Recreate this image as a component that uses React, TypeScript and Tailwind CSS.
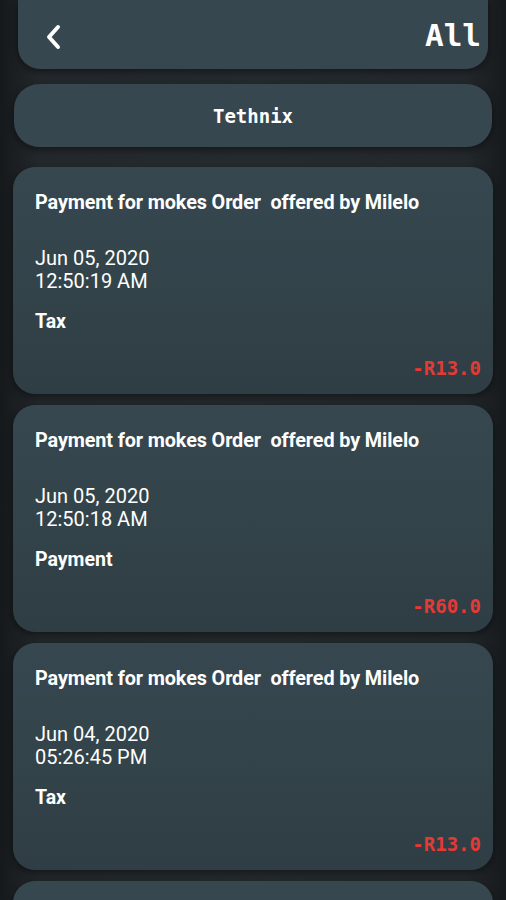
import React from "react";

const items = [
  { date: "Jun 05, 2020", time: "12:50:19 AM", type: "Tax", amount: "-R13.0" },
  { date: "Jun 05, 2020", time: "12:50:18 AM", type: "Payment", amount: "-R60.0" },
  { date: "Jun 04, 2020", time: "05:26:45 PM", type: "Tax", amount: "-R13.0" },
];

export default function App() {
  return (
    <div className="w-[506px] h-[900px] overflow-hidden bg-[linear-gradient(90deg,#16191c_0%,#24292d_8%,#262b2f_50%,#24292d_92%,#16191c_100%)]">
      <div className="mx-[18px] h-[69px] rounded-b-[22px] bg-[#37474f] shadow-[0_3px_8px_rgba(0,0,0,0.45)] flex items-center justify-between pl-[26px] pr-[7px] pt-[2px]">
        <svg width="20" height="26" viewBox="0 0 20 26" className="mt-[2px]">
          <path d="M14 3 L5 13 L14 23" fill="none" stroke="#ffffff" strokeWidth="4" strokeLinecap="round" strokeLinejoin="round" />
        </svg>
        <span className="text-white font-bold text-[31px] leading-none mt-[0px] font-['DejaVu_Sans_Mono',monospace]">All</span>
      </div>
      <div className="mx-[14px] mt-[15px] h-[63px] rounded-[25px] bg-[#37474f] shadow-[0_3px_8px_rgba(0,0,0,0.45)] flex items-center justify-center pt-[2px]">
        <span className="text-white text-[19px] font-bold font-['DejaVu_Sans_Mono',monospace]">Tethnix</span>
      </div>
      <div className="mx-[13px] mt-[20px] flex flex-col gap-[11px]">
        {items.map((it, i) => (
          <div
            key={i}
            className="h-[227px] rounded-[22px] bg-[linear-gradient(180deg,#37474f_0%,#33434a_55%,#2f3d44_100%)] shadow-[0_3px_8px_rgba(0,0,0,0.45)] px-[22px] pt-[24px] flex flex-col font-['Roboto',sans-serif] text-white"
          >
            <div className="text-[19.8px] font-bold leading-[24px] whitespace-pre tracking-[-0.1px]">Payment for mokes Order  offered by Milelo</div>
            <div className="mt-[32px] text-[20px] leading-[23px]">
              <div>{it.date}</div>
              <div>{it.time}</div>
            </div>
            <div className="mt-[17px] text-[19.5px] font-bold leading-[24px]">{it.type}</div>
            <div className="mt-[22px] self-end mr-[-10px] text-[19px] font-bold leading-[24px] text-[#e53935] font-['DejaVu_Sans_Mono',monospace]">{it.amount}</div>
          </div>
        ))}
        <div className="h-[227px] rounded-[22px] bg-[linear-gradient(180deg,#37474f_0%,#33434a_55%,#2f3d44_100%)] shadow-[0_3px_8px_rgba(0,0,0,0.45)]" />
      </div>
    </div>
  );
}
